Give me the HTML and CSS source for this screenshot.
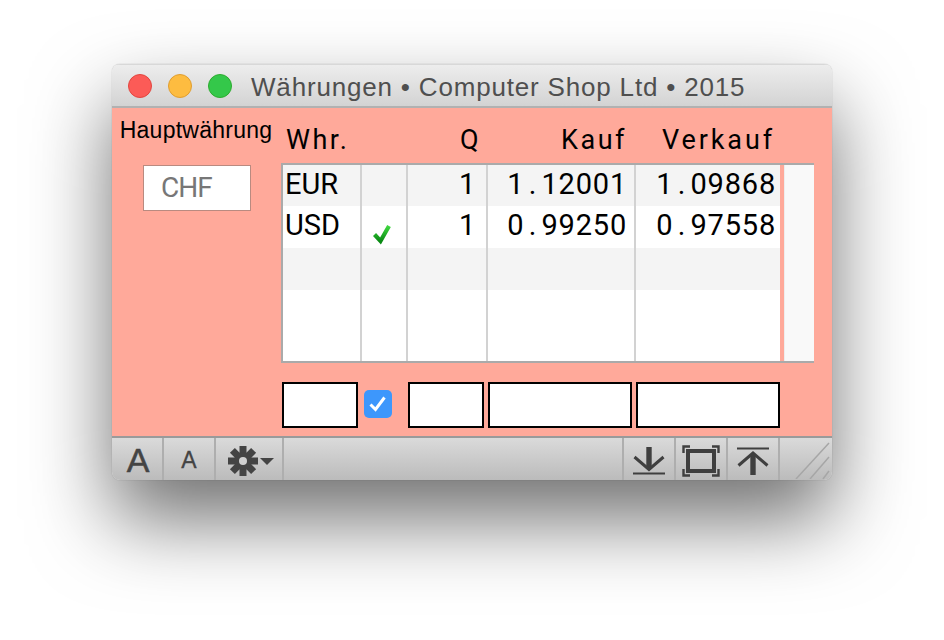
FILE: index.html
```html
<!DOCTYPE html>
<html lang="de">
<head>
<meta charset="utf-8">
<title>Währungen</title>
<link rel="stylesheet" href="styles.css">
</head>
<body>
<div class="window">
  <header class="titlebar">
    <span class="light red"></span><span class="light yellow"></span><span class="light green"></span>
    <span class="title">Währungen • Computer Shop Ltd • 2015</span>
  </header>
  <main class="content">
    <aside class="side">
      <div class="side-label">Hauptwährung</div>
      <div class="main-cur">CHF</div>
    </aside>
    <section class="panel">
      <div class="head cols">
        <div class="h-whr">Whr.</div><div></div><div class="h-q">Q</div><div class="h-k">Kauf</div><div class="h-v">Verkauf</div>
      </div>
      <div class="table">
        <div class="rows">
          <div class="row cols grey tall">
            <div class="c cur">EUR</div><div class="c"></div><div class="c num q">1</div><div class="c num k">1<span class="dot">.</span>12001</div><div class="c num v">1<span class="dot">.</span>09868</div>
          </div>
          <div class="row cols">
            <div class="c cur">USD</div>
            <div class="c tick"><svg width="20" height="24" viewBox="0 0 20 24"><defs><linearGradient id="g" x1="0" y1="0" x2="0" y2="1"><stop offset="0" stop-color="#3fd83f"/><stop offset="1" stop-color="#0a8a14"/></linearGradient></defs><path d="M1.5 12.5 L7.5 19 L16 4" fill="none" stroke="url(#g)" stroke-width="4.2"/></svg></div>
            <div class="c num q">1</div><div class="c num k">0<span class="dot">.</span>99250</div><div class="c num v">0<span class="dot">.</span>97558</div>
          </div>
          <div class="row cols grey"><div class="c"></div><div class="c"></div><div class="c"></div><div class="c"></div><div class="c"></div></div>
          <div class="row cols last"><div class="c"></div><div class="c"></div><div class="c"></div><div class="c"></div><div class="c"></div></div>
        </div>
        <div class="pink"></div>
        <div class="scroll"></div>
      </div>
      <div class="inputs">
        <div class="box w76"></div>
        <div class="check"><svg width="18" height="16" viewBox="0 0 18 16"><path d="M1.5 8.5 L6.5 13.5 L15.5 1.5" fill="none" stroke="#fff" stroke-width="3"/></svg></div>
        <div class="box w76 gapl"></div>
        <div class="box w144"></div>
        <div class="box w144"></div>
      </div>
    </section>
  </main>
  <footer class="bar">
    <div class="tool t-a1">A</div>
    <div class="tool t-a2">A</div>
    <div class="tool t-gear">
      <svg width="50" height="32" viewBox="0 0 50 32">
        <g fill="#444">
          <rect x="12.5" y="1" width="7" height="30"/>
          <rect x="12.5" y="1" width="7" height="30" transform="rotate(45 16 16)"/>
          <rect x="12.5" y="1" width="7" height="30" transform="rotate(90 16 16)"/>
          <rect x="12.5" y="1" width="7" height="30" transform="rotate(135 16 16)"/>
          <circle cx="16" cy="16" r="9"/>
          <path d="M33 13 H47 L40 20 Z"/>
        </g>
        <circle cx="16" cy="16" r="4" fill="#d0d0d0"/>
      </svg>
    </div>
    <div class="spacer"></div>
    <div class="tool t-ico">
      <svg width="34" height="30" viewBox="0 0 34 30"><g fill="none" stroke="#3f3f3f"><path d="M17 1 V22" stroke-width="5.4"/><path d="M2.5 11 L17 23.5 L31.5 11" stroke-width="3"/><path d="M1 27.5 H33" stroke-width="2"/></g></svg>
    </div>
    <div class="tool t-ico">
      <svg width="38" height="32" viewBox="0 0 38 32"><g fill="none" stroke="#3f3f3f"><rect x="6" y="6" width="26" height="20" stroke-width="4"/><path d="M8 1.5 H1.5 V8 M30 1.5 H36.5 V8 M8 30.5 H1.5 V24 M30 30.5 H36.5 V24" stroke-width="2.4"/></g></svg>
    </div>
    <div class="tool t-ico">
      <svg width="34" height="30" viewBox="0 0 34 30"><g fill="none" stroke="#3f3f3f"><path d="M1 2.5 H33" stroke-width="2"/><path d="M17 8 V29" stroke-width="5.4"/><path d="M2.5 19.5 L17 7 L31.5 19.5" stroke-width="3"/></g></svg>
    </div>
    <div class="grip">
      <svg width="52" height="41" viewBox="0 0 52 41"><g stroke="#a6a6a6" stroke-width="1.5" fill="none"><path d="M16 41 L49 5"/><path d="M30 41 L49 19"/><path d="M43 41 L49 33"/></g></svg>
    </div>
  </footer>
</div>
</body>
</html>
```
FILE: styles.css
```css
* { box-sizing: border-box; }
html, body { margin: 0; height: 100%; }
body {
  width: 944px;
  height: 640px;
  padding: 64px 112px;
  background: #fff;
  overflow: hidden;
  font-family: "Liberation Sans", Arial, sans-serif;
}
.window {
  width: 720px;
  height: 416px;
  border-radius: 8px;
  overflow: hidden;
  display: flex;
  flex-direction: column;
  box-shadow: 0 40px 80px rgba(0,0,0,.56), 0 0 1px rgba(0,0,0,.4);
}
.titlebar {
  height: 44px;
  flex: none;
  display: flex;
  align-items: center;
  padding-left: 16px;
  background: linear-gradient(#ededed, #d3d3d3);
  border-top: 1px solid #d8d8d8;
  border-bottom: 2px solid #b1b1b1;
}
.light {
  width: 24px;
  height: 24px;
  border-radius: 50%;
  margin-right: 16px;
  margin-top: 1px;
}
.red { background: #fc5b57; border: 1px solid #e2463f; }
.yellow { background: #fdbc40; border: 1px solid #e09e30; }
.green { background: #34c84a; border: 1px solid #2dac2f; }
.title {
  margin-left: 3px;
  margin-top: 3px;
  font-size: 26px;
  letter-spacing: .82px;
  color: #4f4f4f;
  white-space: nowrap;
}
.content {
  height: 328px;
  flex: none;
  display: flex;
  background: #ffa99a;
}
.side {
  width: 169px;
  flex: none;
  display: flex;
  flex-direction: column;
  align-items: center;
  padding-top: 9px;
}
.side-label {
  font-size: 23px;
  line-height: 27px;
  letter-spacing: .25px;
  color: #000;
  margin-left: -1px;
  white-space: nowrap;
}
.main-cur {
  width: 108px;
  height: 46px;
  margin-top: 21px;
  margin-left: 1px;
  padding-left: 17px;
  background: #fff;
  border: 1px solid #b98a80;
  color: #777;
  font: 28px/44px Roboto, sans-serif;
  letter-spacing: -1px;
}
.panel { width: 533px; flex: none; }
.cols {
  display: grid;
  grid-template-columns: 79px 46px 80px 148px 144px;
}
.head {
  height: 55px;
  margin-left: 2px;
  padding-top: 16px;
  font: 27px/32px Roboto, sans-serif;
  letter-spacing: 2.5px;
  color: #000;
}
.h-whr { padding-left: 3px; }
.h-q { text-align: right; padding-right: 7px; }
.h-k { text-align: right; padding-right: 9px; }
.h-v { text-align: right; padding-right: 5px; letter-spacing: 2.9px; }
.table {
  width: 533px;
  height: 200px;
  display: flex;
  border-top: 2px solid #aaa;
  border-bottom: 2px solid #aaa;
  border-left: 2px solid #aaa;
  background: #fff;
}
.rows { flex: none; width: 497px; display: flex; flex-direction: column; }
.row { height: 42px; flex: none; }
.tall { height: 41px; }
.last { height: 71px; }
.grey { background: #f4f4f4; }
.c {
  border-right: 2px solid #d2d2d2;
  font: 29px/38px Roboto, sans-serif;
  color: #000;
}
.c:last-child { border-right: 0; }
.cur { padding-left: 2px; }
.num { text-align: right; letter-spacing: .8px; }
.q { padding-right: 10px; }
.k { padding-right: 7px; }
.v { padding-right: 4px; }
.dot { margin: 0 4.3px; }
.tick { display: flex; justify-content: center; padding-top: 16px; padding-right: 2px; }
.pink { width: 4px; flex: none; background: #ffa99a; }
.scroll { flex: 1; background: #f9f9f9; border-left: 1px solid #eee; }
.inputs {
  display: flex;
  align-items: center;
  margin-top: 19px;
  margin-left: 1px;
  height: 46px;
}
.box { height: 46px; background: #fff; border: 2px solid #000; }
.w76 { width: 76px; }
.w144 { width: 144px; margin-right: 4px; }
.gapl { margin-right: 4px; }
.check {
  width: 28px;
  height: 28px;
  margin: 0 16px 2px 6px;
  border-radius: 5px;
  background: #3d97fc;
  display: flex;
  align-items: center;
  justify-content: center;
}
.bar {
  flex: 1;
  display: flex;
  background: linear-gradient(#dadada, #b9b9b9);
  border-top: 2px solid #9a9a9a;
  border-bottom: 1px solid #6a6a6a;
}
.tool {
  display: flex;
  align-items: center;
  justify-content: center;
  flex: none;
  border-right: 2px solid #aeaeae;
  color: #444;
}
.t-a1 { width: 52px; font-size: 34px; -webkit-text-stroke: .5px #444; padding-left: 2px; }
.t-a2 { width: 52px; font-size: 23px; -webkit-text-stroke: .3px #444; }
.t-gear { width: 68px; padding-left: 6px; }
.t-ico { width: 52px; }
.spacer { flex: 1; border-right: 2px solid #aeaeae; }
.grip { width: 52px; flex: none; }
```
